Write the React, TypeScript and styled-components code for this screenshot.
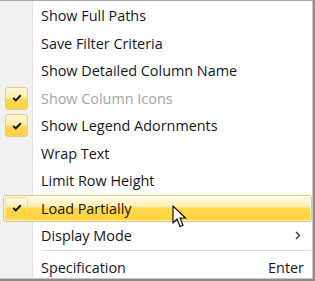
import React from "react";
import styled, {createGlobalStyle} from "styled-components";

const GlobalStyle = createGlobalStyle`
  html, body {
    margin: 0;
    padding: 0;
    background: #fff;
  }
  body {
    font-family: "Open Sans", "Noto Sans", "Liberation Sans", sans-serif;
  }
`;

const Menu = styled.div`
  position: relative;
  width: 315px;
  height: 281px;
  box-sizing: border-box;
  border-top: 1px solid #a8a8a8;
  border-right: 2px solid #8c8c8c;
  border-bottom: 2px solid #8c8c8c;
  box-shadow: inset -1px -1px 0 #c8c8c8;
  padding-top: 1px;
  overflow: hidden;
  background: linear-gradient(to right, #f0f2f2 0, #f0f2f2 32px, #e0e2e2 32px, #e0e2e2 33px, #fff 33px);
`;

const Row = styled.div<{ $active?: boolean }>`
  display: flex;
  align-items: center;
  height: 27.5px;
  margin: 0 1px 0 3px;
  box-sizing: border-box;
  border: 1px solid ${p => p.$active ? '#e6c670' : 'transparent'};
  border-radius: 3px;
  background: ${p => p.$active
    ? 'linear-gradient(to bottom, #fffbe8 0%, #fff0b8 40%, #ffd84c 50%, #ffd23c 100%)'
    : 'transparent'};
  box-shadow: ${p => p.$active ? 'inset 0 0 0 1px rgba(255,255,255,0.6)' : 'none'};
`;

const CheckCell = styled.div`
  width: 36px;
  flex: none;
  display: flex;
  align-items: center;
  padding-left: 1px;
`;

const CheckBox = styled.div<{ $active?: boolean }>`
  width: 23px;
  height: 23px;
  box-sizing: border-box;
  border: 1px solid ${p => p.$active ? '#f3dc98' : '#e4cf88'};
  border-radius: 3px;
  background: ${p => p.$active
    ? 'transparent'
    : 'linear-gradient(to bottom, #fff6d4 0%, #fdecaa 45%, #fcd650 55%, #fbd24a 100%)'};
  display: flex;
  align-items: center;
  justify-content: center;
`;

const Label = styled.span<{ $disabled?: boolean }>`
  flex: 1;
  font-size: 14.4px;
  color: ${p => p.$disabled ? '#a3a3a3' : '#16161c'};
  white-space: nowrap;
`;

const Shortcut = styled.span`
  font-size: 14.4px;
  color: #16161c;
  padding-right: 7px;
`;

const Chevron = styled.span`
  width: 18px;
  display: flex;
  align-items: center;
  justify-content: center;
  margin-right: 4px;
`;

const Separator = styled.div`
  height: 2px;
  margin: 0 2px 1px 42px;
  border-top: 1px solid #dcdcdc;
  background: #fff;
`;

const Cursor = styled.svg`
  position: absolute;
  left: 172px;
  top: 204px;
`;

const Check = () => (
  <svg width="10" height="8" viewBox="0 0 10 8">
    <path d="M1.2 4 L3.8 6.4 L8.8 1.2" fill="none" stroke="#141414" strokeWidth="2"/>
  </svg>
);

type Item = {
  label: string;
  checked?: boolean;
  disabled?: boolean;
  active?: boolean;
  submenu?: boolean;
  shortcut?: string;
};

const items: Item[] = [
  {label: 'Show Full Paths'},
  {label: 'Save Filter Criteria'},
  {label: 'Show Detailed Column Name'},
  {label: 'Show Column Icons', checked: true, disabled: true},
  {label: 'Show Legend Adornments', checked: true},
  {label: 'Wrap Text'},
  {label: 'Limit Row Height'},
  {label: 'Load Partially', checked: true, active: true},
  {label: 'Display Mode', submenu: true},
];

function MenuRow({item}: { item: Item }) {
  return (
    <Row $active={item.active}>
      <CheckCell>
        {item.checked && <CheckBox $active={item.active}><Check/></CheckBox>}
      </CheckCell>
      <Label $disabled={item.disabled}>{item.label}</Label>
      {item.submenu && (
        <Chevron>
          <svg width="6" height="9" viewBox="0 0 6 9">
            <path d="M1 1 L4.5 4.5 L1 8" fill="none" stroke="#333" strokeWidth="1.3"/>
          </svg>
        </Chevron>
      )}
      {item.shortcut && <Shortcut>{item.shortcut}</Shortcut>}
    </Row>
  );
}

export default function App() {
  return (
    <>
      <GlobalStyle/>
      <Menu>
        {items.map(item => <MenuRow key={item.label} item={item}/>)}
        <Separator/>
        <MenuRow item={{label: 'Specification', shortcut: 'Enter'}}/>
        <Cursor width="17" height="24" viewBox="0 0 17 24">
          <path d="M1 1 L1 18 L5 14 L8 21.5 L11 20.3 L8 13 L13.5 13 Z"
                fill="#fff" stroke="#000" strokeWidth="1.1" strokeLinejoin="miter"/>
        </Cursor>
      </Menu>
    </>
  );
}
